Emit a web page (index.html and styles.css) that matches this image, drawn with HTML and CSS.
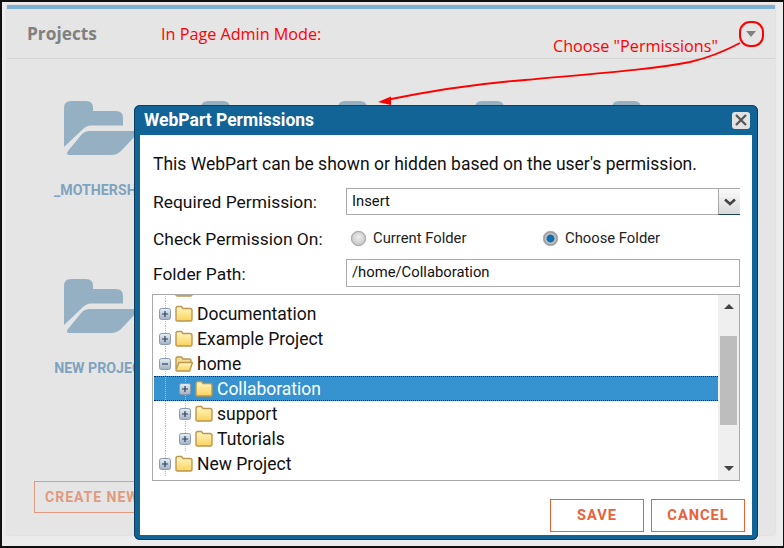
FILE: index.html
```html
<!DOCTYPE html>
<html lang="en">
<head>
<meta charset="utf-8">
<title>WebPart Permissions</title>
<link rel="stylesheet" href="styles.css">
</head>
<body>
<svg class="defs" width="0" height="0" aria-hidden="true">
  <defs>
    <symbol id="big-folder" viewBox="0 0 76 54">
      <path d="M0 7Q0 0 7 0H22Q29 0 29 7V10H52Q59 10 59 17V24.5H27Q22 24.5 18 29L0 46Z"/>
      <path d="M18 33Q21 30 26 30H76L57 50Q53 54 47 54H6Q1 54 4 50Z"/>
    </symbol>
    <linearGradient id="fold" x1="0" y1="0" x2="0" y2="1">
      <stop offset="0" stop-color="#fff6c4"/><stop offset="1" stop-color="#fbd35c"/>
    </linearGradient>
    <linearGradient id="exp" x1="0" y1="0" x2="0" y2="1">
      <stop offset="0" stop-color="#e6edf5"/><stop offset="1" stop-color="#a3b1c4"/>
    </linearGradient>
    <symbol id="folder" viewBox="0 0 18 18">
      <path d="M1 16V4.500Q1 2.500 3 2.500H6.500L8 4.500H15Q17 4.500 17 6.500V15.500Q17 17 15.500 17H2.500Q1 17 1 16Z" fill="url(#fold)" stroke="#bb9750" stroke-width="1.400"/>
    </symbol>
    <symbol id="folder-open" viewBox="0 0 18 18">
      <path d="M1 15V4.500Q1 3 2.500 3H6.500L8 5H14.500Q16 5 16 6.500V8" fill="#f3dd95" stroke="#bb9750" stroke-width="1.400"/>
      <path d="M1 16L4 8.500H17.500L15 16Q14.800 17 14 17H2Q1 17 1 16Z" fill="url(#fold)" stroke="#bb9750" stroke-width="1.400"/>
    </symbol>
    <symbol id="plus" viewBox="0 0 12 12">
      <rect x=".5" y=".5" width="11" height="11" rx="2" fill="url(#exp)" stroke="#8d9bb0"/>
      <path d="M3 6H9M6 3V9" stroke="#2d3f5c" stroke-width="1.200"/>
    </symbol>
    <symbol id="minus" viewBox="0 0 12 12">
      <rect x=".5" y=".5" width="11" height="11" rx="2" fill="url(#exp)" stroke="#8d9bb0"/>
      <path d="M3 6H9" stroke="#2d3f5c" stroke-width="1.200"/>
    </symbol>
  </defs>
</svg>

<main class="panel">
  <header class="panel-head">
    <h1 class="panel-title">Projects</h1>
    <span class="panel-caret"></span>
  </header>
  <div class="project-grid">
    <div class="project"><svg class="project-icon"><use href="#big-folder"/></svg><span class="project-name">_MOTHERSHIP</span></div>
    <div class="project"><svg class="project-icon"><use href="#big-folder"/></svg></div>
    <div class="project"><svg class="project-icon"><use href="#big-folder"/></svg></div>
    <div class="project"><svg class="project-icon"><use href="#big-folder"/></svg></div>
    <div class="project"><svg class="project-icon"><use href="#big-folder"/></svg></div>
    <div class="project"><svg class="project-icon"><use href="#big-folder"/></svg><span class="project-name">NEW PROJECT</span></div>
  </div>
  <div class="create-wrap"><a class="create-btn">CREATE NEW PROJECT</a></div>
</main>

<section class="modal">
  <header class="modal-head">
    <h2 class="modal-title">WebPart Permissions</h2>
    <span class="modal-close">
      <svg width="12" height="12" viewBox="0 0 12 12"><path d="M1 1L11 11M11 1L1 11" stroke="#555" stroke-width="2.200"/></svg>
    </span>
  </header>
  <div class="modal-body">
    <p class="intro">This WebPart can be shown or hidden based on the user's permission.</p>
    <div class="field field-select">
      <label class="field-label">Required Permission:</label>
      <div class="select"><span class="select-value">Insert</span><span class="select-btn">
        <svg width="12" height="8" viewBox="0 0 12 8"><path d="M1 1.500L6 6L11 1.500" fill="none" stroke="#444" stroke-width="2.600"/></svg>
      </span></div>
    </div>
    <div class="field field-radio">
      <label class="field-label">Check Permission On:</label>
      <div class="radios">
        <span class="radio-opt"><span class="radio"></span>Current Folder</span>
        <span class="radio-opt"><span class="radio radio-on"></span>Choose Folder</span>
      </div>
    </div>
    <div class="field field-path">
      <label class="field-label">Folder Path:</label>
      <div class="text-input">/home/Collaboration</div>
    </div>
    <div class="tree">
      <div class="tree-scroll">
        <ul class="tree-rows">
          <li class="row guide"><svg class="exp"><use href="#plus"/></svg><svg class="fld"><use href="#folder"/></svg></li>
          <li class="row guide"><svg class="exp"><use href="#plus"/></svg><svg class="fld"><use href="#folder"/></svg>Documentation</li>
          <li class="row guide"><svg class="exp"><use href="#plus"/></svg><svg class="fld"><use href="#folder"/></svg>Example Project</li>
          <li class="row guide"><svg class="exp"><use href="#minus"/></svg><svg class="fld"><use href="#folder-open"/></svg>home</li>
          <li class="row guide guide2 child selected"><svg class="exp"><use href="#plus"/></svg><svg class="fld"><use href="#folder"/></svg>Collaboration</li>
          <li class="row guide guide2 child"><svg class="exp"><use href="#plus"/></svg><svg class="fld"><use href="#folder"/></svg>support</li>
          <li class="row guide guide2 child"><svg class="exp"><use href="#plus"/></svg><svg class="fld"><use href="#folder"/></svg>Tutorials</li>
          <li class="row guide"><svg class="exp"><use href="#plus"/></svg><svg class="fld"><use href="#folder"/></svg>New Project</li>
        </ul>
      </div>
      <div class="scrollbar">
        <span class="arrow-up"></span>
        <span class="thumb"></span>
        <span class="arrow-down"></span>
      </div>
    </div>
    <footer class="modal-foot">
      <a class="btn">SAVE</a>
      <a class="btn">CANCEL</a>
    </footer>
  </div>
</section>

<span class="note note-mode">In Page Admin Mode:</span>
<span class="note note-choose">Choose "Permissions"</span>
<svg class="callout" width="784" height="548" viewBox="0 0 784 548" aria-hidden="true">
  <rect x="740" y="22" width="23" height="24" rx="10" fill="none" stroke="#f00" stroke-width="2"/>
  <path d="M740 43C725 51 712 57 690 62C650 70 590 74 525 80C470 84 430 91 386 100" fill="none" stroke="#f00" stroke-width="1.800"/>
  <path d="M378 102L391 96.500L391 105Z" fill="#f00"/>
</svg>
</body>
</html>
```

FILE: styles.css
```css
* { box-sizing: border-box; }
html, body { margin: 0; padding: 0; }
body {
  position: relative;
  width: 784px;
  height: 548px;
  overflow: hidden;
  background: #ececec;
  border: 2px solid #111;
  border-right-width: 1px;
  padding: 3px 8px 11px 5px;
  font-family: Roboto, "Liberation Sans", sans-serif;
  color: #111;
}
.defs { position: absolute; }

.panel {
  height: 100%;
  background: #e5e5e5;
  border-top: 4px solid #7fb0d3;
  box-shadow: 0 0 2px #ccc;
  display: flex;
  flex-direction: column;
}
.panel-head {
  height: 50px;
  flex: none;
  border-bottom: 1px solid #d5d5d5;
  display: flex;
  align-items: center;
  justify-content: space-between;
  padding: 0 19px 0 20px;
}
.panel-title {
  margin: 0 0 1px;
  font: 700 17.300px "Open Sans", sans-serif;
  color: #808080;
}
.panel-caret {
  width: 0; height: 0;
  border-left: 5px solid transparent;
  border-right: 5px solid transparent;
  border-top: 6px solid #808080;
}
.project-grid {
  display: grid;
  grid-template-columns: repeat(5, 137px);
  grid-auto-rows: 178px;
  padding: 42px 0 0 26px;
  height: 365px;
  flex: none;
}
.project { display: flex; flex-direction: column; align-items: center; width: 138px; }
.project-icon { width: 76px; height: 54px; fill: #95b0c3; }
.project-name { margin-top: 27px; font-size: 14.200px; font-weight: 700; color: #7ea3bf; white-space: nowrap; }
.create-wrap { padding: 57px 0 0 27px; }
.create-btn {
  display: inline-block;
  height: 32px;
  line-height: 30px;
  padding: 0 10px;
  border: 1px solid #e09a80;
  color: #e09a80;
  font-size: 14px;
  font-weight: 700;
  letter-spacing: 1px;
  white-space: nowrap;
}

.modal {
  position: absolute;
  left: 132px;
  top: 103px;
  width: 624px;
  height: 435px;
  background: #126396;
  border-radius: 6px;
  box-shadow: 0 0 0 1px #0f3f60 inset;
  padding: 0 6px 5px;
  display: flex;
  flex-direction: column;
}
.modal-head { height: 30px; flex: none; display: flex; align-items: center; justify-content: space-between; padding: 0 2px 0 4px; }
.modal-title { margin: 0; font-size: 17.500px; font-weight: 700; color: #fff; }
.modal-close {
  width: 18px; height: 17px;
  background: #e2e2e2;
  border-radius: 3px;
  display: flex; align-items: center; justify-content: center;
}
.modal-body { flex: 1; background: #fff; padding: 18px 12px 0 13px; display: flex; flex-direction: column; }
.intro { margin: 0 0 13px; font-size: 17.500px; line-height: 22px; }
.field { display: flex; align-items: center; }
.field-label { width: 193px; flex: none; font-size: 17.400px; }
.field-select { height: 27px; }
.field-radio { height: 25px; margin-top: 11px; }
.field-path { height: 28px; margin-top: 8px; }
.field-path .field-label { padding-top: 2px; }
.select, .text-input {
  flex: 1;
  height: 100%;
  border: 1px solid #aaa;
  font-size: 14.800px;
}
.select { display: flex; justify-content: space-between; }
.select-value { padding: 3px 5px; }
.select-btn {
  width: 22px;
  background: linear-gradient(#fafafa, #d9d9d9);
  border-left: 1px solid #aaa;
  border-bottom: 1px solid #15405f;
  display: flex; align-items: center; justify-content: center;
  margin: 0 -1px -1px 0;
}
.text-input { padding: 3px 5px; line-height: 18px; }
.radios { display: flex; font-size: 14.800px; margin-top: -2px; }
.radio-opt { display: flex; align-items: center; width: 192px; padding-left: 5px; color: #222; }
.radio {
  width: 15px; height: 15px;
  margin: 2px 7px 0 0;
  border-radius: 50%;
  border: 1px solid #9a9a9a;
  background: radial-gradient(circle at 50% 40%, #eee, #bdbdbd);
  box-shadow: 0 0 1px #aaa;
}
.radio-on { background: radial-gradient(circle, #0f6fb0 0 3.500px, #c9c9c9 4.500px, #8f8f8f 7px); }

.tree {
  margin: 7px 0 0 -1px;
  height: 187px;
  border: 1px solid #aaa;
  display: flex;
  overflow: hidden;
}
.tree-scroll { flex: 1; overflow: hidden; padding-left: 1px; }
.tree-rows { list-style: none; margin: -19px 0 0; padding: 0; }
.row {
  position: relative;
  height: 25px;
  display: flex;
  align-items: center;
  padding-left: 5px;
  font-size: 17.500px;
  color: #111;
}
.row.child { padding-left: 25px; }
.guide::before {
  content: "";
  position: absolute;
  left: 11px; top: 0; bottom: 0;
  border-left: 1px dotted #bbb;
}
.guide2::after {
  content: "";
  position: absolute;
  left: 31px; top: 0; bottom: 0;
  border-left: 1px dotted #bbb;
}
.row.selected {
  background: #3792d0;
  color: #fff;
  border-top: 1px dotted #123;
  border-bottom: 1px dotted #123;
}
.exp { width: 12px; height: 12px; flex: none; position: relative; z-index: 1; }
.fld { width: 18px; height: 18px; flex: none; margin: -2px 4px 0 4px; position: relative; z-index: 1; }
.scrollbar {
  width: 21px;
  flex: none;
  background: #efefef;
  display: flex;
  flex-direction: column;
  align-items: center;
}
.arrow-up {
  margin-top: 9px;
  border-left: 5px solid transparent;
  border-right: 5px solid transparent;
  border-bottom: 5px solid #444;
}
.thumb { width: 17px; height: 89px; margin-top: 27px; background: #bdbdbd; }
.arrow-down {
  margin-top: 41px;
  border-left: 5px solid transparent;
  border-right: 5px solid transparent;
  border-top: 5px solid #444;
}
.modal-foot { display: flex; justify-content: flex-end; gap: 7px; margin: 18px -5px 0 0; }
.btn {
  width: 94px;
  height: 33px;
  line-height: 31px;
  text-align: center;
  border: 1px solid #e8623a;
  color: #e8623a;
  font-size: 14.600px;
  font-weight: 700;
  letter-spacing: 1px;
}

.note { position: absolute; color: #f00; font: 16.200px "Open Sans", sans-serif; white-space: nowrap; }
.note-mode { left: 159px; top: 21px; }
.note-choose { left: 551px; top: 33px; }
.callout { position: absolute; left: -2px; top: -2px; pointer-events: none; }
```
